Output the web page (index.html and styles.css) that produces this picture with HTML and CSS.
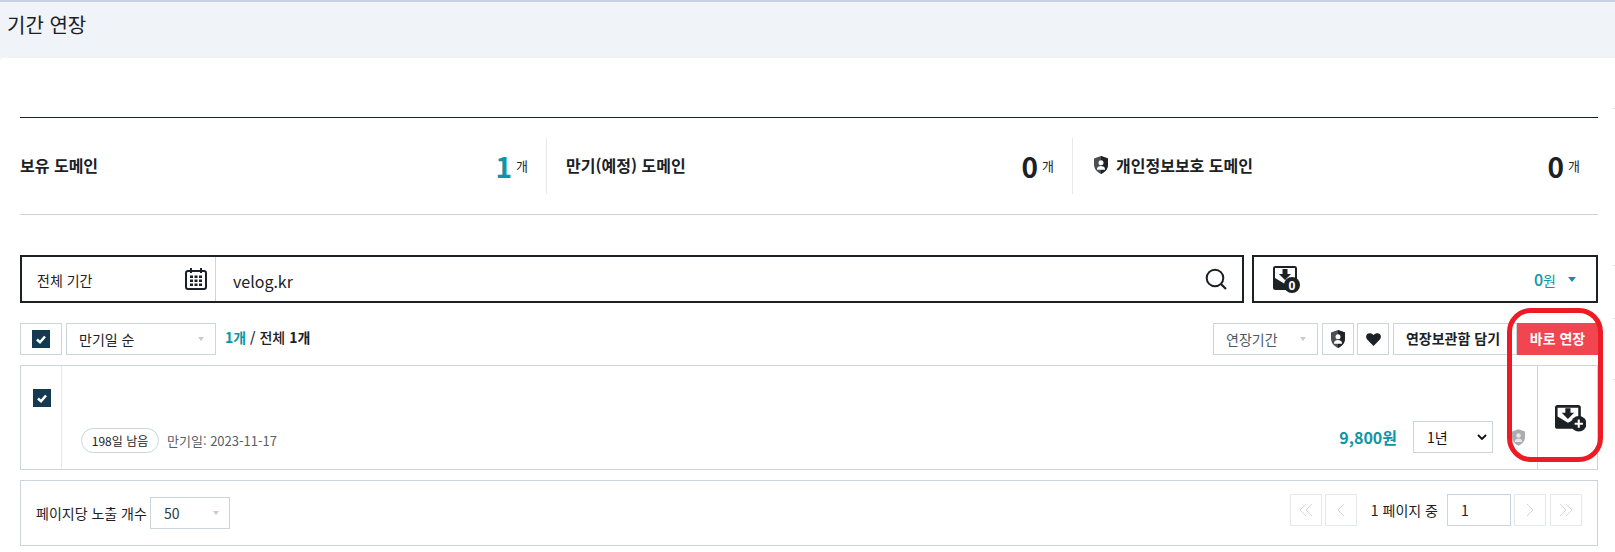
FILE: index.html
```html
<!DOCTYPE html>
<html lang="ko">
<head>
<meta charset="utf-8">
<title>기간 연장</title>
<link rel="stylesheet" href="styles.css">
</head>
<body>
<header class="page-head"><h1 class="page-title">기간 연장</h1></header>
<main class="panel">
  <section class="summary">
    <div class="stat stat-first"><strong class="stat-name">보유 도메인</strong><span class="stat-value"><b class="num teal">1</b><i class="unit">개</i></span></div>
    <div class="stat stat-mid"><strong class="stat-name">만기(예정) 도메인</strong><span class="stat-value"><b class="num">0</b><i class="unit">개</i></span></div>
    <div class="stat stat-last"><strong class="stat-name">
      <svg class="shield" viewBox="1 0 14 18"><path fill="#4b4f53" d="M8 0l7 2.500v6C15 13 12 16 8 18 4 16 1 13 1 8.500v-6z"/><path fill="#1f2326" d="M8 0l7 2.500v6C15 13 12 16 8 18z"/><circle cx="8" cy="6.800" r="2.500" fill="#fff"/><path fill="#fff" d="M4 13c.2-2.200 2-3 4-3s3.800.8 4 3v.8H4z"/></svg>개인정보보호 도메인</strong><span class="stat-value"><b class="num">0</b><i class="unit">개</i></span></div>
  </section>

  <section class="search-row">
    <div class="search-box">
      <div class="period"><span class="period-label">전체 기간</span>
        <svg class="cal" viewBox="0 0 22 22"><rect x="1" y="3" width="20" height="18" rx="2" fill="none" stroke="#1b2124" stroke-width="2"/><path d="M6 0v5M16 0v5" stroke="#1b2124" stroke-width="2"/><path d="M5 7.500h3V10H5zM9.500 7.500h3V10h-3zM14 7.500h3V10h-3zM5 11.500h3V14H5zM9.500 11.500h3V14h-3zM14 11.500h3V14h-3zM5 15.500h3V18H5zM9.500 15.500h3V18h-3zM14 15.500h3V18h-3z" fill="#1b2124"/></svg>
      </div>
      <div class="query">velog.kr</div>
      <svg class="mag" viewBox="0 0 22 22"><circle cx="10" cy="10" r="8.300" fill="none" stroke="#1b2124" stroke-width="2"/><path d="M16 16l5 5" stroke="#1b2124" stroke-width="2.200"/></svg>
    </div>
    <div class="cart-box">
      <svg class="cart" viewBox="0 0 28 28"><rect x="1" y="1" width="24" height="24" rx="2.500" fill="#1b2124"/><path d="M3 3h20v10l-10 6-10-6z" fill="#fff"/><path d="M10.500 4h5v5H19l-6 6-6-6h3.500z" fill="#1b2124"/><circle cx="20" cy="20" r="8" fill="#1b2124"/><text x="20" y="24.500" class="cart-zero">0</text></svg>
      <span class="cart-price">0<span class="cart-won">원</span></span>
      <span class="tri-teal"></span>
    </div>
  </section>

  <section class="toolbar">
    <div class="check-wrap"><span class="check"><svg viewBox="0 0 18 18"><path d="M5 9.500l3 2.800 5-5.800" fill="none" stroke="#fff" stroke-width="2.500"/></svg></span></div>
    <div class="pick pick-sort"><span>만기일 순</span><span class="tri"></span></div>
    <div class="count"><b class="teal">1개</b> / 전체 <b>1개</b></div>
    <div class="tools">
      <div class="pick pick-term"><span>연장기간</span><span class="tri"></span></div>
      <button class="tool-btn"><svg class="shield-sm" viewBox="1 0 14 18"><path fill="#4b4f53" d="M8 0l7 2.500v6C15 13 12 16 8 18 4 16 1 13 1 8.500v-6z"/><path fill="#1f2326" d="M8 0l7 2.500v6C15 13 12 16 8 18z"/><circle cx="8" cy="6.800" r="2.500" fill="#fff"/><path fill="#fff" d="M4 13c.2-2.200 2-3 4-3s3.800.8 4 3v.8H4z"/></svg></button>
      <button class="tool-btn tool-heart"><svg class="heart" viewBox="0 0 16 14"><path fill="#1b2124" d="M8 14L1.400 7.300C-.4 5.400-.4 2.700 1.200 1.200 2.900-.4 5.800-.3 8 2.200c2.200-2.500 5.100-2.600 6.800-1 1.600 1.500 1.600 4.200-.2 6.100z"/></svg></button>
      <button class="text-btn">연장보관함 담기</button>
      <button class="go-btn">바로 연장</button>
    </div>
  </section>

  <section class="item">
    <div class="item-check"><span class="check"><svg viewBox="0 0 18 18"><path d="M5 9.500l3 2.800 5-5.800" fill="none" stroke="#fff" stroke-width="2.500"/></svg></span></div>
    <div class="item-body">
      <div class="item-meta"><span class="pill">198일 남음</span><span class="expire">만기일: 2023-11-17</span></div>
      <div class="item-buy">
        <span class="price">9,800원</span>
        <span class="year"><span>1년</span><svg viewBox="0 0 10 6"><path d="M1 1l4 4 4-4" fill="none" stroke="#111" stroke-width="1.800"/></svg></span>
        <svg class="shield-off" viewBox="1 0 14 18"><path fill="#a9adb1" d="M8 0l7 2.500v6C15 13 12 16 8 18 4 16 1 13 1 8.500v-6z"/><circle cx="8" cy="6.800" r="2.500" fill="#e4e6e8"/><path fill="#e4e6e8" d="M4 13c.2-2.200 2-3 4-3s3.800.8 4 3v.8H4z"/></svg>
      </div>
    </div>
    <div class="item-add">
      <svg class="add" viewBox="0 0 30 26"><rect x="0" y="0" width="25" height="23" rx="2.500" fill="#1b2124"/><path d="M2.500 2.500h20V12l-10 5-10-6z" fill="#fff"/><path d="M10 3h5v4.500h3.500l-6 6-6-6H10z" fill="#1b2124"/><circle cx="23" cy="18" r="7.500" fill="#1b2124"/><path d="M23 14v8M19 18h8" stroke="#fff" stroke-width="2"/></svg>
    </div>
  </section>

  <section class="pager">
    <div class="per-page"><span>페이지당 노출 개수</span><div class="pick pick-size"><span>50</span><span class="tri"></span></div></div>
    <div class="pages">
      <span class="pg"><svg viewBox="0 0 14 14"><path d="M7 1L1 7l6 6M13 1L7 7l6 6" fill="none" stroke="#d4d8db"/></svg></span>
      <span class="pg"><svg viewBox="0 0 14 14"><path d="M10 1L4 7l6 6" fill="none" stroke="#d4d8db"/></svg></span>
      <span class="pg-label">1 페이지 중</span>
      <span class="pg-input">1</span>
      <span class="pg"><svg viewBox="0 0 14 14"><path d="M4 1l6 6-6 6" fill="none" stroke="#d4d8db"/></svg></span>
      <span class="pg pg-last"><svg viewBox="0 0 14 14"><path d="M1 1l6 6-6 6M7 1l6 6-6 6" fill="none" stroke="#d4d8db"/></svg></span>
    </div>
  </section>
</main>
<div class="annotation"></div>
<div class="edge"><i class="tick tick-a"></i><i class="tick tick-b"></i><i class="tick tick-c"></i><i class="tick tick-d"></i></div>
</body>
</html>
```
FILE: styles.css
```css
* { box-sizing: border-box; }
html, body { margin: 0; padding: 0; }
body {
  position: relative;
  width: 1615px;
  height: 552px;
  overflow: hidden;
  background: #fff;
  color: #1b2124;
  font-family: "Noto Sans CJK KR", "Noto Sans", sans-serif;
  font-size: 14px;
}
.page-head {
  height: 62px;
  background: #f0f3f7;
  border-top: 2px solid #c5d0e0;
  padding: 10px 7px 0;
}
.page-title { margin: 0; font-size: 20px; font-weight: 400; line-height: 26px; }
.panel {
  position: relative;
  margin-top: -4px;
  padding: 59px 17px 0 20px;
  background: #fff;
  border-top-left-radius: 4px;
}
.summary {
  display: flex;
  height: 98px;
  border-top: 1px solid #1b2124;
  border-bottom: 1px solid #ccd5dc;
  align-items: center;
}
.stat {
  display: flex;
  align-items: center;
  justify-content: space-between;
  height: 56px;
  border-right: 1px solid #e6e9ec;
}
.stat-first { width: 527px; padding-right: 18px; }
.stat-mid { width: 526px; padding: 0 18px 0 19px; }
.stat-last { flex: 1; border-right: 0; padding: 0 18px 0 20px; }
.stat-name { display: flex; align-items: center; font-size: 16px; font-weight: 700; margin-top: -2px; }
.shield { width: 16px; height: 18px; margin-right: 7px; }
.stat-value { display: flex; align-items: center; }
.num { font-size: 28px; line-height: 32px; font-weight: 700; }
.unit { font-style: normal; font-size: 13px; margin-left: 4px; margin-top: -2px; }
.teal { color: #0e95a5; }

.search-row { display: flex; gap: 8px; margin-top: 40px; }
.search-box, .cart-box {
  display: flex;
  align-items: center;
  height: 48px;
  border: 2px solid #1b2124;
}
.search-box { width: 1224px; }
.period {
  display: flex;
  align-items: center;
  justify-content: space-between;
  width: 194px;
  height: 100%;
  padding: 0 8px 0 15px;
  border-right: 1px solid #ccd5dc;
  font-size: 14px;
}
.period-label { padding-top: 1px; }
.cal { width: 22px; height: 22px; }
.query { flex: 1; padding: 3px 0 0 17px; font-size: 16px; }
.mag { width: 22px; height: 22px; margin-right: 15px; }
.cart-box { flex: 1; padding: 0 20px 0 18px; }
.cart { width: 28px; height: 28px; }
.cart-zero { font: 700 12px "Noto Sans", sans-serif; fill: #fff; text-anchor: middle; }
.cart-price { margin-left: auto; color: #0e95a5; font-size: 16px; font-weight: 500; }
.cart-won { font-size: 14px; font-weight: 400; }
.tri {
  display: block;
  width: 0; height: 0;
  border: 3px solid transparent;
  border-top: 4px solid #c6cacd;
  border-bottom: 0;
}
.tri-teal {
  display: block;
  width: 0; height: 0;
  margin-left: 12px;
  border: 4px solid transparent;
  border-top: 5px solid #0e95a5;
  border-bottom: 0;
}

.toolbar { display: flex; align-items: flex-start; margin-top: 20px; height: 42px; }
.check-wrap {
  display: flex; align-items: center; justify-content: center;
  width: 42px; height: 32px;
  border: 1px solid #ccd5dc;
  margin-right: 4px;
}
.check { display: block; width: 18px; height: 18px; background: #143a52; }
.check svg { display: block; width: 18px; height: 18px; }
.pick {
  display: flex; align-items: center; justify-content: space-between;
  height: 32px;
  border: 1px solid #ccd5dc;
  padding: 0 11px 0 12px;
  font-size: 14px;
}
.pick-sort { width: 150px; }
.count { margin-left: 9px; line-height: 28px; font-size: 14px; font-weight: 500; }
.count b { font-weight: 700; }
.tools { display: flex; margin-left: auto; }
.pick-term { width: 105px; margin-right: 4px; color: #4d5a66; }
.tool-btn, .text-btn, .go-btn {
  height: 32px;
  padding: 0;
  background: #fff;
  border: 1px solid #ccd5dc;
  font-family: inherit;
  color: #1b2124;
}
.tool-btn { display: flex; align-items: center; justify-content: center; width: 32px; margin-right: 3px; }
.tool-heart { margin-right: 4px; }
.shield-sm { width: 16px; height: 18px; }
.heart { width: 15px; height: 13px; }
.text-btn { width: 124px; padding: 0 4px 3px 0; font-size: 14px; font-weight: 700; }
.go-btn { width: 81px; padding-bottom: 3px; background: #f1454f; border: 0; color: #fff; font-size: 14px; font-weight: 700; }

.item {
  display: flex;
  height: 105px;
  border: 1px solid #ccd5dc;
}
.item-check { width: 41px; padding: 23px 0 0 12px; border-right: 1px solid #e6e9ec; }
.item-body {
  flex: 1;
  display: flex;
  align-items: flex-end;
  justify-content: space-between;
  padding: 0 12px 16px 19px;
}
.item-meta { display: flex; align-items: center; }
.pill {
  display: flex; align-items: center; justify-content: center;
  width: 78px; height: 25px;
  border: 1px solid #ccd5dc;
  border-radius: 13px;
  font-size: 12px;
}
.expire { margin-left: 8px; font-size: 13px; color: #5a6066; }
.item-buy { display: flex; align-items: center; }
.price { color: #0e95a5; font-size: 16px; font-weight: 700; margin-right: 16px; }
.year {
  display: flex; align-items: center; justify-content: space-between;
  width: 80px; height: 32px;
  border: 1px solid #ccd5dc;
  padding: 0 2px 0 13px;
  font-size: 14px;
  color: #111;
  margin-right: 19px;
}
.year svg { width: 10px; height: 6px; margin-right: 3px; }
.shield-off { width: 13px; height: 17px; }
.item-add {
  display: flex; align-items: center; justify-content: center;
  width: 60px;
  border-left: 1px solid #ccd5dc;
}
.add { width: 31px; height: 27px; margin: 2px 0 0 5px; }

.pager {
  display: flex; align-items: center; justify-content: space-between;
  margin-top: 10px;
  height: 66px;
  border: 1px solid #ccd5dc;
  padding: 0 15px 0 15px;
}
.per-page { display: flex; align-items: center; font-size: 14px; }
.pick-size { width: 80px; margin-left: 3px; color: #2c3a47; padding: 0 10px 0 13px; }
.pages { display: flex; align-items: center; gap: 3px; margin-top: -6px; }
.pg {
  display: flex; align-items: center; justify-content: center;
  width: 32px; height: 32px;
  border: 1px solid #e6e9ec;
}
.pg-last { margin-left: 1px; }
.pg svg { width: 14px; height: 14px; }
.pg-label { margin: 0 6px 0 11px; font-size: 14px; }
.pg-input {
  width: 64px; height: 32px;
  border: 1px solid #ccd5dc;
  padding-left: 13px;
  line-height: 30px;
  font-size: 14px;
}

.annotation {
  position: absolute;
  left: 1507px; top: 308px;
  width: 96px; height: 154px;
  border: 5px solid #ed1c24;
  border-radius: 24px;
}
.edge { position: absolute; left: 1613px; top: 0; width: 2px; height: 552px; }
.tick { position: absolute; left: 0; width: 2px; height: 1px; background: #dfe2e5; }
.tick-a { top: 108px; }
.tick-b { top: 265px; }
.tick-c { top: 318px; }
.tick-d { top: 379px; }
```
